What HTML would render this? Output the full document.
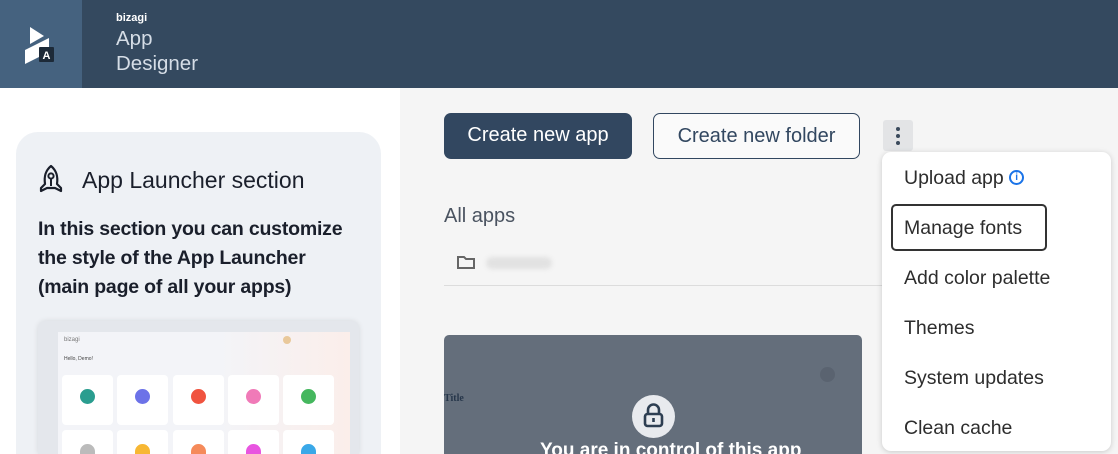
<!DOCTYPE html>
<html><head><meta charset="utf-8"><style>
*{margin:0;padding:0;box-sizing:border-box}
html{width:1118px;height:454px;overflow:hidden}
body{width:1118px;height:454px;overflow:hidden;background:#f5f5f5;font-family:"Liberation Sans",sans-serif;position:relative}
.hdr{position:absolute;left:0;top:0;width:1118px;height:88px;background:#34495f}
.logo{position:absolute;left:0;top:0;width:82px;height:88px;background:#45627f}
.brand{position:absolute;left:116px;top:12px;color:#fff;font-size:11px;font-weight:bold}
.app{position:absolute;left:116px;top:26px;color:#d5dde6;font-size:20.5px;line-height:25px}
.left{position:absolute;left:0;top:88px;width:400px;height:366px;background:#fff}
.card{position:absolute;left:16px;top:132px;width:365px;height:322px;background:#eef1f5;border-radius:22px 22px 0 0}
.ct{position:absolute;left:82px;top:167px;font-size:23px;color:#1a1f2b}
.cb{position:absolute;left:38px;top:215px;font-size:19.5px;line-height:29px;color:#1a1f2b;font-weight:bold;width:312px;letter-spacing:-0.2px}
.clip{position:absolute;left:0;top:0;width:1118px;height:454px;overflow:hidden}
.prev{position:absolute;left:38px;top:321px;width:321px;height:133px;background:#e4e7ec;border-radius:8px 8px 0 0;box-shadow:0 0 6px rgba(0,0,0,.1)}
.scr{position:absolute;left:58px;top:332px;width:292px;height:122px;background:linear-gradient(90deg,#f3f4f8 55%,#fbeeea)}
.tile{position:absolute;width:51px;height:50px;background:#fff;border-radius:4px}
.t2{height:24px;border-radius:4px 4px 0 0}
.dot{position:absolute;left:18px;top:14px;width:15px;height:15px;border-radius:50%}
.t2 .dot{height:10px;border-radius:8px 8px 0 0}
.btn1{position:absolute;left:444px;top:113px;width:188px;height:46px;background:#324760;border-radius:7px;color:#fff;font-size:20px;text-align:center;line-height:45px}
.btn2{position:absolute;left:653px;top:113px;width:207px;height:46px;border:1px solid #324760;border-radius:7px;color:#324760;font-size:20px;text-align:center;line-height:44px;background:#fafafa}
.kebab{position:absolute;left:883px;top:120px;width:30px;height:31px;background:#e3e4e6;border-radius:3px}
.kebab i{position:absolute;left:13px;width:4px;height:4px;border-radius:50%;background:#3a4a5c}
.all{position:absolute;left:444px;top:205px;font-size:20px;color:#4a5360}
.line{position:absolute;left:444px;top:285px;width:440px;height:1px;background:#dcdcdc}
.gcard{position:absolute;left:444px;top:335px;width:418px;height:119px;background:#646e7b;border-radius:5px 5px 0 0;overflow:hidden}
.menu{position:absolute;left:882px;top:152px;width:229px;height:299px;background:#fff;border-radius:9px;box-shadow:0 1px 6px rgba(0,0,0,.18)}
.mi{position:absolute;left:22px;font-size:19.5px;color:#2d2d2d}
</style></head><body>
<div class="clip">
<div class="hdr"></div>
<div class="logo">
<svg width="82" height="88" viewBox="0 0 82 88"><polygon points="30,27 44,36 30,44" fill="#fff"/><polygon points="25,50 49,38 49,52 25,64" fill="#fff"/><rect x="39" y="47" width="15" height="15" rx="1" fill="#1d2a38"/><text x="46.5" y="59" font-size="11" font-weight="bold" fill="#fff" text-anchor="middle" font-family="Liberation Sans">A</text></svg>
</div>
<div class="brand">bizagi</div>
<div class="app">App<br>Designer</div>
<div class="left"></div>
<div class="card"></div>
<svg style="position:absolute;left:37px;top:164px" width="28" height="30" viewBox="0 0 28 30"><path d="M14 2 C8 7 7 13 8 20 L4 24 L4 27 L10 24 L18 24 L24 27 L24 24 L20 20 C21 13 20 7 14 2Z" fill="none" stroke="#1a1f2b" stroke-width="2.2" stroke-linejoin="round"/><circle cx="14" cy="12" r="2.6" fill="none" stroke="#1a1f2b" stroke-width="2"/><line x1="14" y1="15" x2="14" y2="22" stroke="#1a1f2b" stroke-width="2"/></svg>
<div class="ct">App Launcher section</div>
<div class="cb">In this section you can customize the style of the App Launcher (main page of all your apps)</div>
<div class="prev"></div>
<div class="scr">
<div style="position:absolute;left:6px;top:5px;font-size:6px;color:#777">bizagi</div>
<div style="position:absolute;left:6px;top:24px;font-size:5px;color:#444">Hello, Demo!</div>
<div style="position:absolute;left:225px;top:4px;width:8px;height:8px;border-radius:50%;background:#e9c89a"></div>
</div>
<div class="tile" style="left:62px;top:375px"><div class="dot" style="background:#2a9d8f"></div></div>
<div class="tile" style="left:117px;top:375px"><div class="dot" style="background:#6c72e8"></div></div>
<div class="tile" style="left:173px;top:375px"><div class="dot" style="background:#f0533f"></div></div>
<div class="tile" style="left:228px;top:375px"><div class="dot" style="background:#f07ab8"></div></div>
<div class="tile" style="left:283px;top:375px"><div class="dot" style="background:#45b75e"></div></div>
<div class="tile t2" style="left:62px;top:430px"><div class="dot" style="background:#bbb"></div></div>
<div class="tile t2" style="left:117px;top:430px"><div class="dot" style="background:#f7b733"></div></div>
<div class="tile t2" style="left:173px;top:430px"><div class="dot" style="background:#f58a5a"></div></div>
<div class="tile t2" style="left:228px;top:430px"><div class="dot" style="background:#e855e0"></div></div>
<div class="tile t2" style="left:283px;top:430px"><div class="dot" style="background:#3aa8e8"></div></div>
<div class="btn1">Create new app</div>
<div class="btn2">Create new folder</div>
<div class="kebab"><i style="top:7px"></i><i style="top:14px"></i><i style="top:21px"></i></div>
<div class="all">All apps</div>
<svg style="position:absolute;left:456px;top:255px" width="20" height="15" viewBox="0 0 20 15"><path d="M2 2 H8 L10 4 H18 V13 H2 Z" fill="none" stroke="#666" stroke-width="2"/></svg>
<div style="position:absolute;left:486px;top:257px;width:66px;height:12px;background:#e2e2e2;border-radius:6px;filter:blur(2px)"></div>
<div class="line"></div>
<div class="gcard">
<div style="position:absolute;left:0;top:58px;font-family:'Liberation Serif',serif;font-weight:bold;font-size:10px;color:#26364a">Title</div>
<div style="position:absolute;left:376px;top:32px;width:15px;height:15px;border-radius:50%;background:#5a6370"></div>
<div style="position:absolute;left:188px;top:60px;width:43px;height:43px;border-radius:50%;background:#e8eaee"></div>
<svg style="position:absolute;left:199px;top:68px" width="21" height="26" viewBox="0 0 21 26"><path d="M5 11 V7 a5.5 5.5 0 0 1 11 0 V11" fill="none" stroke="#2d3e52" stroke-width="2.6"/><rect x="2" y="11" width="17" height="12" rx="2.5" fill="none" stroke="#2d3e52" stroke-width="2.6"/><rect x="9.2" y="15" width="2.6" height="4" fill="#2d3e52"/></svg>
<div style="position:absolute;left:96px;top:105px;color:#fff;font-size:19px;line-height:22px;font-weight:bold">You are in control of this app</div>
</div>
<div class="menu">
<div class="mi" style="top:15px">Upload app <span style="display:inline-block;width:15px;height:15px;border:2px solid #1a73e8;border-radius:50%;color:#1a73e8;font-size:10px;font-weight:bold;text-align:center;line-height:11px;vertical-align:4px">i</span></div>
<div style="position:absolute;left:9px;top:52px;width:156px;height:47px;border:2.5px solid #333;border-radius:5px"></div>
<div class="mi" style="top:65px">Manage fonts</div>
<div class="mi" style="top:115px">Add color palette</div>
<div class="mi" style="top:165px">Themes</div>
<div class="mi" style="top:215px">System updates</div>
<div class="mi" style="top:265px">Clean cache</div>
</div>
</div>
</body></html>
